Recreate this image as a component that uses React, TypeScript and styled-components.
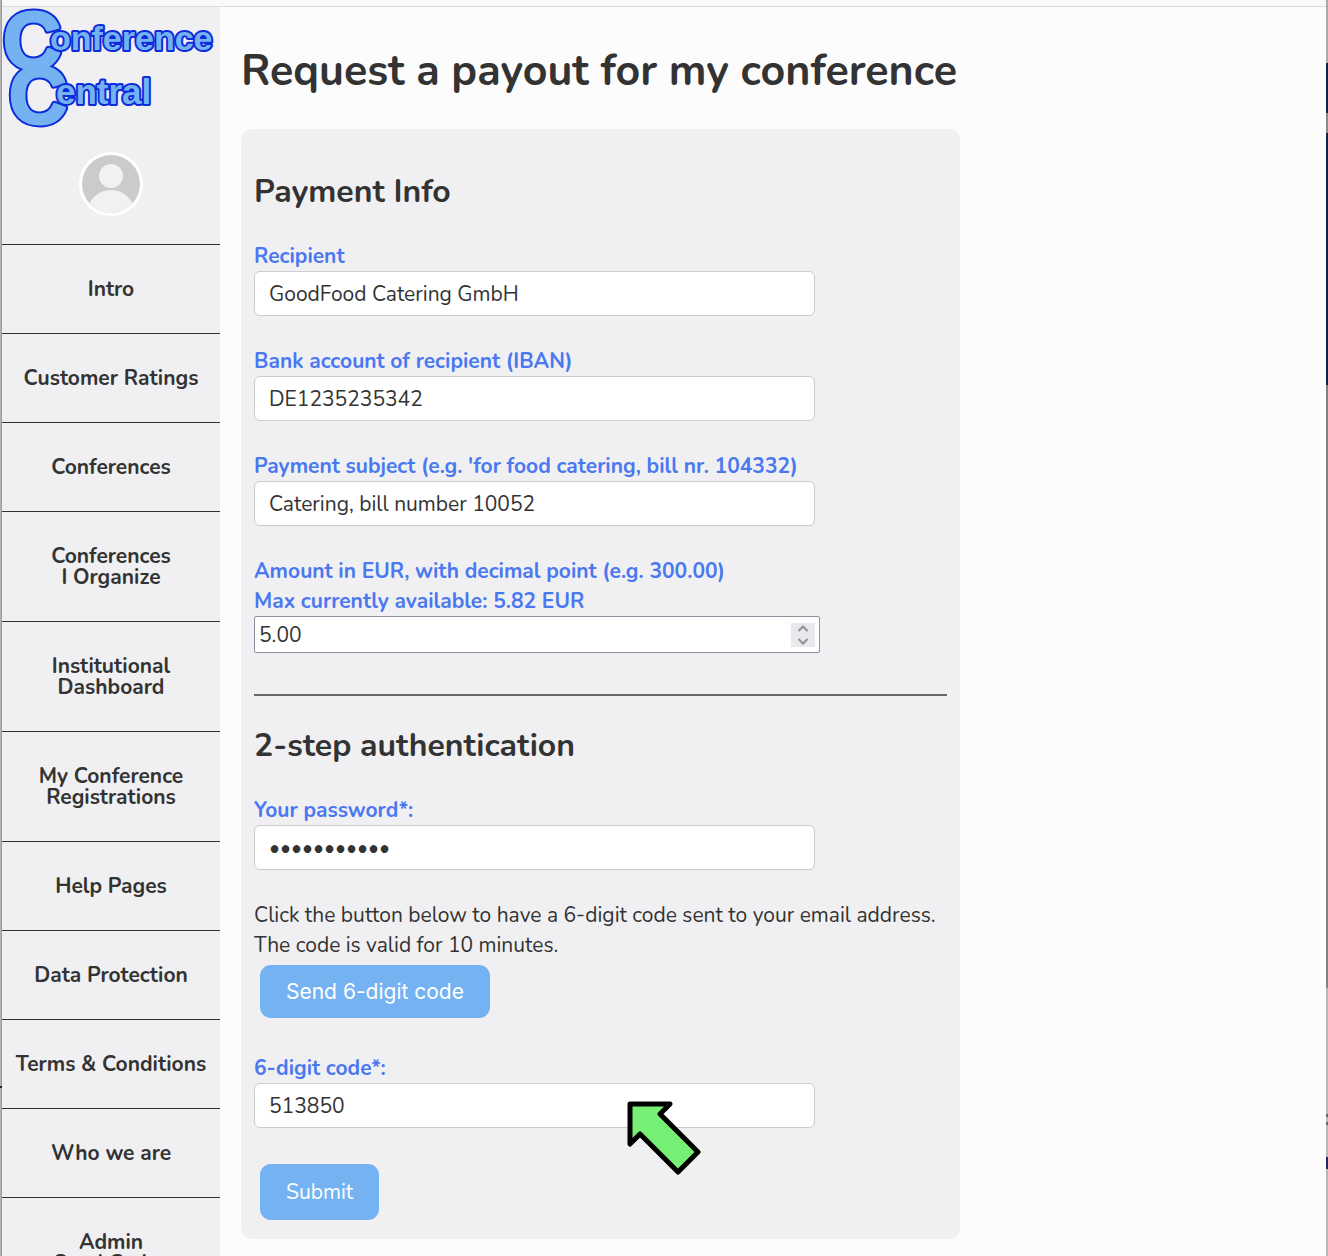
import React, { useState } from "react";
import styled, { createGlobalStyle } from "styled-components";

const GlobalStyle = createGlobalStyle`
  *, *::before, *::after { box-sizing: border-box; }
  body {
    margin: 0;
    background: #fcfcfc;
    color: #333333;
    font-family: Nunito, "Open Sans", "Noto Sans", sans-serif;
    font-size: 21px;
    line-height: 30px;
  }
`;

const Shell = styled.div`
  display: grid;
  grid-template-columns: 2px minmax(0, 1fr) 2px;
  height: 100vh;
  overflow: hidden;
`;

const LeftEdge = styled.div`
  background:
    linear-gradient(to bottom, transparent 1086px, #222222 1086px 1088px, transparent 1088px),
    linear-gradient(to right, #b4b4b6 50%, #9a9a9c 50%);
`;

const RightEdge = styled.div`
  background: linear-gradient(
    to bottom,
    #a9a9a9 0 63px, #0f2347 63px 113px, #8a8a8a 113px 133px, #0f2347 133px 385px,
    #808080 385px 988px, #b8b8b8 988px 1114px, #666666 1114px 1117px,
    #b8b8b8 1117px 1122px, #666666 1122px 1125px, #b8b8b8 1125px 1157px,
    #232860 1157px 1169px, #b8b8b8 1169px
  );
`;

const Page = styled.div`
  display: flex;
  flex-direction: column;
  min-width: 0;
`;

const TopStrip = styled.div`
  flex: none;
  height: 7px;
  background: #f9f9fb;
  border-bottom: 1px solid #dcdcdc;
`;

const Columns = styled.div`
  display: flex;
  flex: 1;
  align-items: flex-start;
`;

const Sidebar = styled.aside`
  flex: none;
  width: 218px;
  background: #f0f0f2;
`;

const LogoLink = styled.a`
  display: block;
  height: 128px;
`;

const LogoArt = styled.svg`
  display: block;
  overflow: visible;
  font-family: "Liberation Sans", Arial, sans-serif;
  font-weight: 700;
`;

const AvatarButton = styled.button`
  display: block;
  width: 64px;
  height: 64px;
  margin: 17px auto 28px;
  padding: 0;
  border: 0;
  border-radius: 50%;
  background: none;
`;

const NavItem = styled.a`
  display: block;
  padding: 34px 4px 33px;
  border-top: 1px solid #333333;
  color: #333333;
  font-weight: 700;
  line-height: 21px;
  text-align: center;
  text-decoration: none;
  white-space: pre-line;
`;

const Main = styled.main`
  flex: 1;
  min-width: 0;
  padding: 32px 21px;
`;

const Title = styled.h1`
  margin: 0 0 26px;
  font-size: 43px;
  line-height: 64px;
  font-weight: 700;
`;

const Card = styled.form`
  max-width: 719px;
  padding: 39px 13px 19px;
  border-radius: 11px;
  background: #f0f0f2;
`;

const SectionTitle = styled.h2`
  margin: 0 0 25px;
  font-size: 32px;
  line-height: 48px;
  font-weight: 700;
`;

const Field = styled.div`
  display: flex;
  flex-direction: column;
  align-items: flex-start;
  margin-bottom: 30px;
`;

const Label = styled.label`
  color: #4a78f0;
  font-weight: 700;
  white-space: pre-line;
`;

const TextInput = styled.input`
  width: 100%;
  max-width: 561px;
  height: 45px;
  padding: 0 14px;
  border: 1px solid #cccccc;
  border-radius: 6px;
  background: #ffffff;
  color: #333333;
  font: inherit;
  outline: none;
`;

const AmountBox = styled.div`
  display: flex;
  align-items: center;
  width: 100%;
  max-width: 566px;
  height: 37px;
  padding: 0 4px;
  border: 1px solid #8f8f9d;
  border-radius: 2px;
  background: #ffffff;
`;

const AmountInput = styled.input`
  flex: 1;
  min-width: 0;
  padding: 0;
  border: 0;
  background: none;
  color: #333333;
  font: inherit;
  outline: none;
  appearance: textfield;
  &::-webkit-inner-spin-button { display: none; }
`;

const Spinner = styled.div`
  display: flex;
  flex-direction: column;
  width: 24px;
  background: #e9e9ed;
`;

const StepButton = styled.button`
  display: flex;
  align-items: center;
  justify-content: center;
  height: 12px;
  padding: 0;
  border: 0;
  background: none;
`;

const Rule = styled.hr`
  height: 2px;
  margin: 41px 0 26px;
  border: 0;
  background: #666666;
`;

const Hint = styled.p`
  margin: 0;
`;

const Action = styled.button`
  display: block;
  height: 53px;
  margin: 5px 6px 35px;
  padding: 0 26px;
  border: 0;
  border-radius: 11px;
  background: #74b2f1;
  color: #ffffff;
  font-family: Inter, sans-serif;
  font-size: 21px;
`;

const SubmitAction = styled(Action)`
  height: 56px;
  margin: 36px 6px 0;
  font-family: inherit;
`;

const CodeField = styled(Field)`
  position: relative;
  margin-bottom: 0;
`;

const Pointer = styled.svg`
  position: absolute;
  top: 46px;
  left: 371px;
  pointer-events: none;
`;

function Logo() {
  return (
    <LogoArt width="218" height="128" viewBox="2 7 218 128" role="img" aria-label="Conference Central">
      <defs>
        <g id="capitals" fontSize="80">
          <text x="3" y="68">C</text>
          <text x="9" y="123">C</text>
        </g>
      </defs>
      <g strokeLinejoin="round">
        <use href="#capitals" fill="#0c2cdc" stroke="#0c2cdc" strokeWidth="7" />
        <use href="#capitals" fill="#74b2f1" stroke="#74b2f1" strokeWidth="3" />
        <g fill="#74b2f1" stroke="#0c2cdc" strokeWidth="4" paintOrder="stroke">
          <text x="50" y="50" fontSize="34">onference</text>
          <text x="56" y="104" fontSize="35">entral</text>
        </g>
      </g>
    </LogoArt>
  );
}

function Avatar() {
  return (
    <svg width="64" height="64" viewBox="0 0 64 64" aria-hidden="true">
      <defs><clipPath id="face"><circle cx="32" cy="32" r="29" /></clipPath></defs>
      <circle cx="32" cy="32" r="32" fill="#fff" />
      <circle cx="32" cy="32" r="29" fill="#cbcbcb" />
      <g fill="#f1f1f1" clipPath="url(#face)">
        <circle cx="32" cy="24" r="12" />
        <circle cx="32" cy="62" r="24" />
      </g>
    </svg>
  );
}

function Chevron({ up }: { up?: boolean }) {
  return (
    <svg width="12" height="8" viewBox="0 0 12 8" fill="none" stroke="#8f8f9d" strokeWidth="2" aria-hidden="true">
      <path d={up ? "M1.5 6L6 1.5L10.5 6" : "M1.5 2L6 6.5L10.5 2"} />
    </svg>
  );
}

const navItems = [
  "Intro", "Customer Ratings", "Conferences", "Conferences\nI Organize",
  "Institutional\nDashboard", "My Conference\nRegistrations", "Help Pages",
  "Data Protection", "Terms & Conditions", "Who we are", "Admin\nSend Codes",
];

export default function App() {
  const [amount, setAmount] = useState("5.00");
  const step = (by: number) => setAmount((Number(amount) + by).toFixed(2));
  return (
    <>
      <GlobalStyle />
      <Shell>
        <LeftEdge />
        <Page>
          <TopStrip />
          <Columns>
            <Sidebar>
              <LogoLink href="#home"><Logo /></LogoLink>
              <AvatarButton type="button" aria-label="Account"><Avatar /></AvatarButton>
              <nav>
                {navItems.map((item) => <NavItem key={item} href="#page">{item}</NavItem>)}
              </nav>
            </Sidebar>
            <Main>
              <Title>Request a payout for my conference</Title>
              <Card onSubmit={(e) => e.preventDefault()}>
                <SectionTitle>Payment Info</SectionTitle>
                <Field>
                  <Label htmlFor="recipient">Recipient</Label>
                  <TextInput id="recipient" defaultValue="GoodFood Catering GmbH" />
                </Field>
                <Field>
                  <Label htmlFor="iban">Bank account of recipient (IBAN)</Label>
                  <TextInput id="iban" defaultValue="DE1235235342" />
                </Field>
                <Field>
                  <Label htmlFor="subject">Payment subject (e.g. 'for food catering, bill nr. 104332)</Label>
                  <TextInput id="subject" defaultValue="Catering, bill number 10052" />
                </Field>
                <Field>
                  <Label htmlFor="amount">{"Amount in EUR, with decimal point (e.g. 300.00)\nMax currently available: 5.82 EUR"}</Label>
                  <AmountBox>
                    <AmountInput id="amount" type="number" step="0.01" value={amount} onChange={(e) => setAmount(e.target.value)} />
                    <Spinner>
                      <StepButton type="button" aria-label="Increase amount" onClick={() => step(0.01)}><Chevron up /></StepButton>
                      <StepButton type="button" aria-label="Decrease amount" onClick={() => step(-0.01)}><Chevron /></StepButton>
                    </Spinner>
                  </AmountBox>
                </Field>
                <Rule />
                <SectionTitle>2-step authentication</SectionTitle>
                <Field>
                  <Label htmlFor="password">Your password*:</Label>
                  <TextInput id="password" type="password" defaultValue="conference1" />
                </Field>
                <Hint>
                  Click the button below to have a 6-digit code sent to your email address.
                  <br />
                  The code is valid for 10 minutes.
                </Hint>
                <Action type="button">Send 6-digit code</Action>
                <CodeField>
                  <Label htmlFor="code">6-digit code*:</Label>
                  <TextInput id="code" defaultValue="513850" />
                  <Pointer width="78" height="76" viewBox="0 0 78 76" aria-hidden="true">
                    <path d="M5 5H45L35 15L73 53L53 73L15 35L5 45Z" fill="#76f075" stroke="#000" strokeWidth="5" strokeLinejoin="round" />
                  </Pointer>
                </CodeField>
                <SubmitAction type="submit">Submit</SubmitAction>
              </Card>
            </Main>
          </Columns>
        </Page>
        <RightEdge />
      </Shell>
    </>
  );
}
